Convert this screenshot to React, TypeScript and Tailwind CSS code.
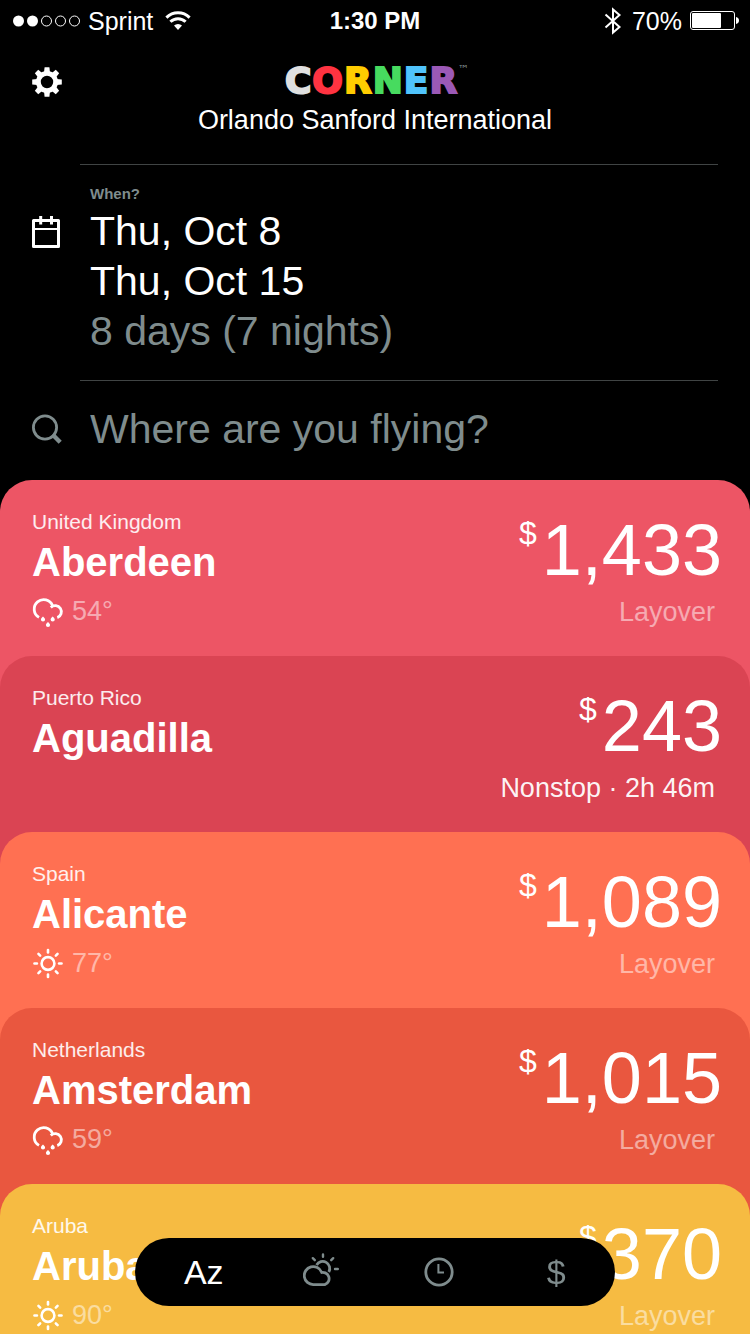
import { useState } from 'react';

type Weather = 'rain' | 'sun';

type Destination = {
  country: string;
  city: string;
  price: string;
  weather?: Weather;
  temp?: string;
  nonstop?: string;
  bg: string;
};

const destinations: Destination[] = [
  { country: 'United Kingdom', city: 'Aberdeen', price: '1,433', weather: 'rain', temp: '54°', bg: 'bg-[#ed5565]' },
  { country: 'Puerto Rico', city: 'Aguadilla', price: '243', nonstop: '2h 46m', bg: 'bg-[#da4453]' },
  { country: 'Spain', city: 'Alicante', price: '1,089', weather: 'sun', temp: '77°', bg: 'bg-[#ff7052]' },
  { country: 'Netherlands', city: 'Amsterdam', price: '1,015', weather: 'rain', temp: '59°', bg: 'bg-[#e9573f]' },
  { country: 'Aruba', city: 'Aruba', price: '370', weather: 'sun', temp: '90°', bg: 'bg-[#f6bb42]' },
];

const eighths = [0, 45, 90, 135, 180, 225, 270, 315];

function GearIcon() {
  return (
    <svg width="30" height="30" viewBox="0 0 30 30" fill="none" stroke="currentColor">
      <circle cx="15" cy="15" r="8.6" strokeWidth="4.8" />
      {eighths.map((a) => (
        <path key={a} d="M12 5.5 12.6 0.2h4.8L18 5.5z" fill="currentColor" stroke="none" transform={`rotate(${a} 15 15)`} />
      ))}
    </svg>
  );
}

function CalendarIcon() {
  return (
    <svg width="28" height="32" viewBox="0 0 28 32" fill="none" stroke="currentColor">
      <rect x="1.5" y="4.5" width="25" height="26" strokeWidth="3" strokeLinejoin="round" />
      <path d="M2 13h24" strokeWidth="2" />
      <path d="M8.7 0v8.5M19.5 0v8.5" strokeWidth="3" />
    </svg>
  );
}

function SearchIcon() {
  return (
    <svg width="30" height="30" viewBox="0 0 30 30" fill="none" stroke="currentColor">
      <circle cx="13" cy="13.5" r="11.6" strokeWidth="2.8" />
      <path d="M20.5 20.5l2 2" strokeWidth="2.8" />
      <path d="M21.5 21.5l6.7 6.7" strokeWidth="4.4" />
    </svg>
  );
}

function RainIcon() {
  return (
    <svg width="32" height="32" viewBox="0 0 32 32" fill="none" stroke="currentColor" strokeWidth="2.8">
      <path d="M7 22.4A9.5 9.5 0 1 1 20.6 10.8" />
      <path d="M18.8 12.4A6.2 6.2 0 1 1 25.3 22.6" />
      <path
        d="M11 21.6c1 1 2.1 1.9 2.1 2.9a2.1 2.1 0 0 1-4.2 0c0-1 1-1.9 2.1-2.9zM20.7 21.6c1 1 2.1 1.9 2.1 2.9a2.1 2.1 0 0 1-4.2 0c0-1 1-1.9 2.1-2.9zM16 27c1 1 2.1 1.9 2.1 2.9a2.1 2.1 0 0 1-4.2 0c0-1 1-1.9 2.1-2.9z"
        fill="currentColor"
        stroke="none"
      />
    </svg>
  );
}

function SunIcon() {
  return (
    <svg width="32" height="32" viewBox="0 0 32 32" fill="none" stroke="currentColor" strokeWidth="2.6">
      <circle cx="16" cy="16.5" r="6.4" />
      {eighths.map((a) => (
        <path key={a} d="M16 3v2.4" strokeLinecap="round" transform={`rotate(${a} 16 16.5)`} />
      ))}
    </svg>
  );
}

function PartlyCloudyIcon() {
  return (
    <svg width="36" height="34" viewBox="0 0 36 34" fill="none" stroke="currentColor" strokeWidth="2.8">
      <path d="M10.4 32.6a9 9 0 1 1 8.2-12.4M17.4 20.8a6.3 6.3 0 1 1 4.4 11.8H10" />
      <path d="M13.6 13A6.8 6.8 0 1 1 25.8 20" />
      <path d="M20 2.4v2.4M9.8 6.2l2 2M30.2 6.2l-2 2M32 17h2.8" strokeWidth="2.4" strokeLinecap="round" />
    </svg>
  );
}

function ClockIcon() {
  return (
    <svg width="30" height="30" viewBox="0 0 30 30" fill="none" stroke="currentColor">
      <circle cx="15" cy="15" r="13.2" strokeWidth="2.8" />
      <path d="M14.4 7v8.6h5.6" strokeWidth="2" />
    </svg>
  );
}

function StatusBar() {
  return (
    <div className="grid h-10 grid-cols-[1fr_auto_1fr] items-center text-[25px] leading-[42px]">
      <div className="flex items-center pl-3">
        <svg width="70" height="14" viewBox="0 0 70 14" fill="none" stroke="white">
          <circle cx="6.5" cy="7" r="5.5" fill="white" stroke="none" />
          <circle cx="20.5" cy="7" r="5.5" fill="white" stroke="none" />
          <circle cx="34.5" cy="7" r="5" />
          <circle cx="48.5" cy="7" r="5" />
          <circle cx="62.5" cy="7" r="5" />
        </svg>
        <span className="ml-1.5">Sprint</span>
        <svg className="ml-3" width="26" height="20" viewBox="0 0 26 20" fill="none" stroke="white" strokeWidth="3">
          <path d="M1.4 6.6a16.6 16.6 0 0 1 23.2 0" />
          <path d="M5.4 10.8a10.8 10.8 0 0 1 15.2 0" />
          <path d="M13 19l-4-4.4a5.6 5.6 0 0 1 8 0z" fill="white" stroke="none" />
        </svg>
      </div>
      <span className="text-[24px] font-bold">1:30 PM</span>
      <div className="flex items-center justify-end pr-2.5">
        <svg width="18" height="28" viewBox="0 0 18 28" fill="none" stroke="white" strokeWidth="2">
          <path d="M1.5 7.5L15.5 20 9 25.5V2.5l6.5 5.5L1.5 20.5" />
        </svg>
        <span className="ml-2.5">70%</span>
        <svg className="ml-2" width="50" height="20" viewBox="0 0 50 20">
          <rect x="0.5" y="0.5" width="44" height="18" rx="2.5" fill="none" stroke="white" />
          <rect x="2" y="2" width="29" height="15" rx="1" fill="white" />
          <path d="M46 6c4 .6 4 6.4 0 7z" fill="white" />
        </svg>
      </div>
    </div>
  );
}

function DestinationCard({ d }: { d: Destination }) {
  return (
    <li className={`-mt-8 flex items-start justify-between rounded-t-[32px] pt-7 pr-7 pb-8 pl-8 first:mt-0 ${d.bg}`}>
      <div className="flex h-[148px] flex-col">
        <div className="text-[21px] leading-7 text-white/90">{d.country}</div>
        <h2 className="text-[40px] leading-[52px] font-bold">{d.city}</h2>
        {d.weather && (
          <div className="mt-1.5 flex h-[34px] items-center gap-2">
            {d.weather === 'rain' ? <RainIcon /> : <SunIcon />}
            <span className="text-[27px] leading-[34px] text-white/50">{d.temp}</span>
          </div>
        )}
      </div>
      <div className="flex flex-col items-end pt-1.5">
        <div className="flex items-start">
          <span className="mt-[3px] mr-[5px] text-[32px] leading-8">$</span>
          <span className="text-[72px] leading-[72px]">{d.price}</span>
        </div>
        <div className={`mt-[9px] mr-[7px] text-[27px] leading-[34px] ${d.nonstop ? 'text-white/95' : 'text-white/50'}`}>
          {d.nonstop ? `Nonstop · ${d.nonstop}` : 'Layover'}
        </div>
      </div>
    </li>
  );
}

const sorts = [
  { id: 'name', label: 'Sort by name', icon: <span className="text-[34px] leading-10">Az</span> },
  { id: 'weather', label: 'Sort by weather', icon: <PartlyCloudyIcon /> },
  { id: 'time', label: 'Sort by flight time', icon: <ClockIcon /> },
  { id: 'price', label: 'Sort by price', icon: <span className="text-[34px] leading-10">$</span> },
];

export default function App() {
  const [query, setQuery] = useState('');
  const [sort, setSort] = useState('name');

  return (
    <div className="h-dvh overflow-y-auto bg-black font-['Liberation_Sans',Arial,sans-serif] text-white [scrollbar-width:none]">
      <StatusBar />

      <header className="grid h-[124px] grid-cols-[80px_1fr_80px] items-start">
        <button aria-label="Settings" className="mt-[27px] ml-8 w-fit cursor-pointer">
          <GearIcon />
        </button>
        <div className="flex flex-col items-center pt-5">
          <h1 className="flex items-start gap-px pl-1 font-['DejaVu_Sans',sans-serif] text-[36px] leading-[42px] font-bold">
            <span className="text-[#e0e0e0] [-webkit-text-stroke:2px]">C</span>
            <span className="text-[#ff3341] [-webkit-text-stroke:2px]">O</span>
            <span className="text-[#ffcc00] [-webkit-text-stroke:2px]">R</span>
            <span className="text-[#47db5f] [-webkit-text-stroke:2px]">N</span>
            <span className="text-[#50c4fc] [-webkit-text-stroke:2px]">E</span>
            <span className="text-[#9b59b6] [-webkit-text-stroke:2px]">R</span>
            <span className="text-[11px] leading-5 font-normal text-[#7f8c8d]">™</span>
          </h1>
          <div className="text-[27px] leading-9">Orlando Sanford International</div>
        </div>
      </header>

      <hr className="mr-8 ml-20 border-[#404444]" />

      <button className="flex w-full cursor-pointer items-start pb-6 text-left">
        <span className="mt-[51px] ml-8 w-[58px] shrink-0">
          <CalendarIcon />
        </span>
        <span className="flex flex-col pt-[17px] text-[41px] leading-[50px]">
          <span className="text-[15px] leading-6 font-bold text-[#7f8c8d]">When?</span>
          <span>Thu, Oct 8</span>
          <span>Thu, Oct 15</span>
          <span className="text-[#7f8c8d]">8 days (7 nights)</span>
        </span>
      </button>

      <hr className="mr-8 ml-20 border-[#404444]" />

      <div className="flex items-center pt-[23px] pr-8 pb-[26px] text-[#7f8c8d]">
        <label htmlFor="destination" aria-label="Destination" className="ml-8 w-[58px] shrink-0">
          <SearchIcon />
        </label>
        <input
          id="destination"
          type="text"
          value={query}
          onChange={(e) => setQuery(e.target.value)}
          placeholder="Where are you flying?"
          className="h-[50px] min-w-0 flex-1 text-[41px] leading-[50px] text-white outline-none placeholder:text-[#7f8c8d]"
        />
      </div>

      <ul>
        {destinations.map((d) => (
          <DestinationCard key={d.city} d={d} />
        ))}
      </ul>

      <nav className="fixed bottom-7 left-1/2 grid h-[68px] w-[64%] -translate-x-1/2 grid-cols-4 rounded-full bg-black pl-2.5">
        {sorts.map((s) => (
          <button
            key={s.id}
            aria-label={s.label}
            onClick={() => setSort(s.id)}
            className={`flex cursor-pointer items-center justify-center ${s.id === 'weather' ? 'pb-1.5' : ''} ${sort === s.id ? 'text-white' : 'text-[#7f8c8d]'}`}
          >
            {s.icon}
          </button>
        ))}
      </nav>
    </div>
  );
}
